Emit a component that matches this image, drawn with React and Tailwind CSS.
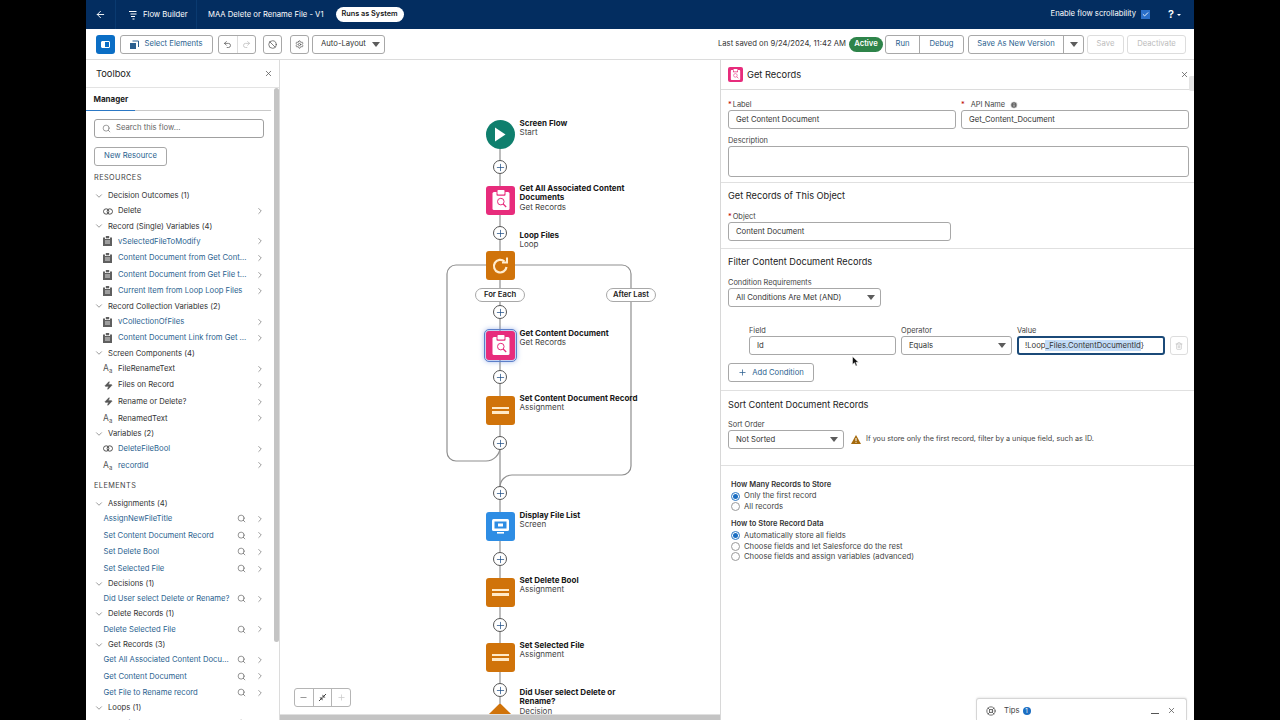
import React from "react";
import { ArrowLeft, Search, ChevronRight, ChevronDown, X, Undo2, Redo2, Ban, Settings, Plus, Minus, Trash2, Zap, Check, Info, LifeBuoy } from "lucide-react";

const Caret = ({ c = "#5c5c5c" }) => (
  <svg width="8" height="5" viewBox="0 0 8 5"><path d="M0 0h8L4 5z" fill={c} /></svg>
);

const RecIcon = () => (
  <svg width="9" height="10" viewBox="0 0 9 10"><path d="M0 1.5h2V3h5V1.5h2V10H0z" fill="#5f5f5f" /><rect x="2.8" y="0" width="3.4" height="2.3" fill="#5f5f5f" /><path d="M2 5h5M2 7h5" stroke="#fff" strokeWidth=".8" /></svg>
);
const BoolIcon = () => (
  <svg width="10" height="7" viewBox="0 0 10 7" fill="none" stroke="#444" strokeWidth=".9"><circle cx="3.2" cy="3.5" r="2.7" /><circle cx="6.8" cy="3.5" r="2.7" /></svg>
);
const TextIcon = () => (
  <span className="text-[8.5px] leading-none text-[#555]">A<sub className="text-[6px]">a</sub></span>
);
const ZapIcon = () => <Zap size={9} className="ml-[1px] text-[#555] fill-[#555]" />;
const icons = { rec: RecIcon, bool: BoolIcon, text: TextIcon, zap: ZapIcon };

const Group = ({ children }) => (
  <div className="flex h-[13.8px] items-center gap-[4px] pl-[8px] text-[#333]">
    <ChevronDown size={10} strokeWidth={1.3} className="text-[#444]" />
    <span className="whitespace-nowrap">{children}</span>
  </div>
);

const Res = ({ icon, children, dark }) => {
  const I = icons[icon];
  return (
    <div className="flex h-[16.6px] items-center pl-[17px] pr-[6px]">
      <span className="flex w-[15px] shrink-0 justify-start"><I /></span>
      <span className={`flex-1 whitespace-nowrap ${dark ? "text-[#333]" : "text-[#2b5f8f]"}`}>{children}</span>
      <ChevronRight size={10} strokeWidth={1.3} className="text-[#444]" />
    </div>
  );
};

const El = ({ children }) => (
  <div className="flex h-[16.6px] items-center pl-[17.5px] pr-[6px]">
    <span className="flex-1 whitespace-nowrap text-[#2b5f8f]">{children}</span>
    <Search size={9} strokeWidth={1.5} className="mr-[9px] text-[#444]" />
    <ChevronRight size={10} strokeWidth={1.3} className="text-[#444]" />
  </div>
);

const Btn = ({ children, className = "" }) => (
  <div className={`flex h-[19px] items-center justify-center whitespace-nowrap rounded-[3px] border border-[#a8a8a8] bg-white ${className}`}>{children}</div>
);

const Toolbox = () => (
  <aside className="relative flex w-[194px] shrink-0 flex-col border-r border-[#dcdcdc] bg-white text-[7.7px]">
    <div className="flex h-[28px] shrink-0 items-center justify-between border-b border-[#e3e3e3] pl-[10px] pr-[6.500px]">
      <span className="text-[9.300px] text-[#222]">Toolbox</span>
      <X size={9} className="text-[#555]" />
    </div>
    <div className="flex min-h-0 flex-1">
      <div className="min-w-0 w-[185px] overflow-hidden">
        <div className="h-[22.5px] border-b border-[#c9c9c9]">
          <div className="flex h-[22.5px] w-[49px] items-center border-b border-[#2b78c5] pl-[7.5px] text-[8px] font-bold text-[#222]">Manager</div>
        </div>
        <div className="ml-[8px] mt-[8px] flex h-[19px] w-[170px] items-center gap-[5px] rounded-[3px] border border-[#a0a0a0] pl-[7px] text-[#666]">
          <Search size={9} strokeWidth={1.5} className="text-[#555]" /> Search this flow...
        </div>
        <Btn className="ml-[8px] mt-[9px] w-[73px] text-[#2b5f8f]">New Resource</Btn>
        <div className="ml-[8px] mt-[6.5px] mb-[5px] h-[12px] text-[7.3px] leading-[12px] tracking-[.06em] text-[#444]">RESOURCES</div>
        <Group>Decision Outcomes (1)</Group>
        <Res icon="bool" dark>Delete</Res>
        <Group>Record (Single) Variables (4)</Group>
        <Res icon="rec">vSelectedFileToModify</Res>
        <Res icon="rec">Content Document from Get Cont...</Res>
        <Res icon="rec">Content Document from Get File t...</Res>
        <Res icon="rec">Current Item from Loop Loop Files</Res>
        <Group>Record Collection Variables (2)</Group>
        <Res icon="rec">vCollectionOfFiles</Res>
        <Res icon="rec">Content Document Link from Get ...</Res>
        <Group>Screen Components (4)</Group>
        <Res icon="text" dark>FileRenameText</Res>
        <Res icon="zap" dark>Files on Record</Res>
        <Res icon="zap" dark>Rename or Delete?</Res>
        <Res icon="text" dark>RenamedText</Res>
        <Group>Variables (2)</Group>
        <Res icon="bool">DeleteFileBool</Res>
        <Res icon="text">recordId</Res>
        <div className="ml-[8px] mt-[6.5px] mb-[4.5px] h-[12px] text-[7.3px] leading-[12px] tracking-[.06em] text-[#444]">ELEMENTS</div>
        <Group>Assignments (4)</Group>
        <El>AssignNewFileTitle</El>
        <El>Set Content Document Record</El>
        <El>Set Delete Bool</El>
        <El>Set Selected File</El>
        <Group>Decisions (1)</Group>
        <El>Did User select Delete or Rename?</El>
        <Group>Delete Records (1)</Group>
        <El>Delete Selected File</El>
        <Group>Get Records (3)</Group>
        <El>Get All Associated Content Docu...</El>
        <El>Get Content Document</El>
        <El>Get File to Rename record</El>
        <Group>Loops (1)</Group>
        <El>Loop Files</El>
      </div>
      <div className="ml-[3px] h-[554px] w-[5px] rounded-full bg-[#c4c4c4]" />
    </div>
  </aside>
);

const PlusNode = ({ y }) => (
  <div className="absolute left-[213px] flex h-[14px] w-[14px] items-center justify-center rounded-full border border-[#555] bg-white text-[#1f4e85]" style={{ top: y - 7 - 60 }}>
    <Plus size={11} strokeWidth={1.6} />
  </div>
);

const Clip = ({ c = "#e72c7c", size = 20 }) => (
  <svg width={size} height={size} viewBox="0 0 20 20">
    <rect x="1.5" y="2" width="17" height="18" rx="1.5" fill="#fff" />
    <rect x="5.5" y="0" width="9" height="5.8" rx="1" fill={c} />
    <rect x="6.5" y="0" width="7" height="4.6" rx=".8" fill="#fff" />
    <circle cx="9.8" cy="11.6" r="3.3" fill="none" stroke={c} strokeWidth="1" />
    <path d="M12.2 14l3 3" stroke={c} strokeWidth="1.2" />
  </svg>
);

const Tile = ({ y, color, children, ring }) => (
  <div className={`absolute left-[206px] flex h-[29px] w-[29px] items-center justify-center rounded-[3px] ${ring ? "outline-[1.5px] outline-[#5c7fc9] outline-offset-[1px] shadow-[0_0_5px_2px_rgba(90,130,220,.5)]" : ""}`} style={{ top: y - 14.5 - 60, background: color }}>
    {children}
  </div>
);

const Label = ({ y, title, sub }) => (
  <div className="absolute left-[239.5px] text-[8px] leading-[9.7px]" style={{ top: y + 0.5 - 60 }}>
    {title.map((t) => <div key={t} className="whitespace-nowrap font-bold text-[#181818]">{t}</div>)}
    <div className="text-[#444]">{sub}</div>
  </div>
);

const Pill = ({ x, children }) => (
  <div className="absolute top-[228px] flex h-[14px] w-[50px] items-center justify-center rounded-full border border-[#a8a8a8] bg-white text-[7.7px] font-semibold text-[#222]" style={{ left: x }}>{children}</div>
);

const Eq = () => (
  <div className="flex flex-col gap-[2px]"><div className="h-[2.5px] w-[17px] bg-[#ffe9c7]" /><div className="h-[2.5px] w-[17px] bg-[#ffe9c7]" /></div>
);

const Canvas = () => (
  <main className="relative min-w-0 w-[440px] shrink-0 overflow-hidden bg-white">
    <svg className="absolute left-0 top-0" width="440" height="660" fill="none" stroke="#8f8f8f" strokeWidth="1.2">
      <path d="M220 85V650" />
      <path d="M206 205H176a9 9 0 0 0-9 9V392a9 9 0 0 0 9 9h30a14 14 0 0 0 14-14" />
      <path d="M235 205H342a9 9 0 0 1 9 9V406a9 9 0 0 1-9 9H232a12 12 0 0 0-12 12" />
    </svg>
    <div className="absolute left-[205.5px] top-[59.5px] flex h-[29px] w-[29px] items-center justify-center rounded-full bg-[#0f7f6d]">
      <svg width="12" height="15" viewBox="0 0 12 15"><path d="M1 .5l10.5 7L1 14.5z" fill="#fff" /></svg>
    </div>
    <Tile y={200} color="#e72c7c"><Clip /></Tile>
    <Tile y={265} color="#d0730a">
      <svg width="19" height="19" viewBox="0 0 19 19" fill="none" stroke="#ffeccf" strokeWidth="2.2"><path d="M15.5 11a6.3 6.3 0 1 1-2-5.5" /><path d="M16 1.5v5h-5" strokeWidth="2" /></svg>
    </Tile>
    <Tile y={345} color="#e72c7c" ring><Clip /></Tile>
    <Tile y={410} color="#d0730a"><Eq /></Tile>
    <Tile y={526} color="#2e8de4">
      <svg width="17" height="15" viewBox="0 0 17 15"><rect x="0" y="0" width="17" height="12" rx="1.5" fill="#fff" /><rect x="2.5" y="2.5" width="12" height="7" fill="#2e8de4" /><rect x="6" y="4.5" width="5" height="3" fill="#fff" /><rect x="5" y="13" width="7" height="1.6" fill="#fff" /></svg>
    </Tile>
    <Tile y={592} color="#d0730a"><Eq /></Tile>
    <Tile y={657} color="#d0730a"><Eq /></Tile>
    <div className="absolute left-[208px] top-[648px] h-[24px] w-[24px] rotate-45 rounded-[2px] bg-[#d0730a]" />
    {[167, 233, 312, 377, 443, 493, 559, 625, 690].map((y) => <PlusNode key={y} y={y} />)}
    <Pill x={195}>For Each</Pill>
    <Pill x={326}>After Last</Pill>
    <Label y={118} title={["Screen Flow"]} sub="Start" />
    <Label y={183} title={["Get All Associated Content", "Documents"]} sub="Get Records" />
    <Label y={230} title={["Loop Files"]} sub="Loop" />
    <Label y={328} title={["Get Content Document"]} sub="Get Records" />
    <Label y={393} title={["Set Content Document Record"]} sub="Assignment" />
    <Label y={510} title={["Display File List"]} sub="Screen" />
    <Label y={575} title={["Set Delete Bool"]} sub="Assignment" />
    <Label y={640} title={["Set Selected File"]} sub="Assignment" />
    <Label y={687} title={["Did User select Delete or", "Rename?"]} sub="Decision" />
    <div className="absolute left-[14px] top-[628px] flex h-[19px] w-[57px] rounded-[3px] border border-[#b5b5b5] bg-white">
      <div className="flex flex-1 items-center justify-center border-r border-[#b5b5b5]"><Minus size={9} className="text-[#777]" /></div>
      <div className="flex flex-1 items-center justify-center border-r border-[#b5b5b5]">
        <svg width="9" height="9" viewBox="0 0 9 9"><path d="M1 8l2.5-2.5M8 1L5.5 3.5" stroke="#444" strokeWidth="1" /><path d="M1.5 4.5h3v3zM7.500 4.500h-3v-3z" fill="#444" /></svg>
      </div>
      <div className="flex flex-1 items-center justify-center"><Plus size={9} className="text-[#c9c9c9]" /></div>
    </div>
    <div className="absolute bottom-0 left-0 right-0 h-[6px] border-t border-[#e0e0e0] bg-[#c4c4c4]" />
  </main>
);

const FieldLabel = ({ req, children, className = "" }) => (
  <div className={`mb-[1px] h-[10px] translate-y-[1px] whitespace-nowrap text-[7.4px] leading-[10px] text-[#444] ${className}`}>
    {req && <span className="mr-[1px] text-[#b00]">*</span>}{children}
  </div>
);

const Input = ({ children, className = "" }) => (
  <div className={`flex h-[19px] items-center rounded-[3px] border border-[#a8a8a8] bg-white pl-[7px] text-[#333] ${className}`}>{children}</div>
);

const Select = ({ children, className = "" }) => (
  <div className={`flex h-[19px] items-center justify-between rounded-[3px] border border-[#a8a8a8] bg-white pl-[7px] pr-[5px] text-[#333] ${className}`}>{children}<Caret /></div>
);

const Radio = ({ on, children }) => (
  <div className="flex h-[10.4px] items-center gap-[4px] text-[#444]">
    <span className={`flex h-[9px] w-[9px] items-center justify-center rounded-full border ${on ? "border-[#2b78c5]" : "border-[#9a9a9a]"}`}>
      {on && <span className="h-[5px] w-[5px] rounded-full bg-[#1b6ec2]" />}
    </span>
    {children}
  </div>
);

const Section = ({ children, className = "" }) => (
  <section className={`border-b border-[#e0e0e0] pl-[7px] pr-[4px] ${className}`}>{children}</section>
);

const Heading = ({ children }) => <div className="h-[12px] translate-y-[1px] text-[9.2px] leading-[12px] text-[#222]">{children}</div>;

const Panel = () => (
  <aside className="relative min-w-0 flex-1 overflow-hidden border-l border-[#d8d8d8] bg-white text-[7.7px]">
    <div className="flex h-[30px] items-center border-b border-[#dcdcdc] pl-[7px] pr-[5px]">
      <div className="mr-[4px] flex h-[15px] w-[15px] items-center justify-center rounded-[2px] bg-[#e72c7c]"><Clip size={11} /></div>
      <span className="flex-1 text-[9.3px] text-[#222]">Get Records</span>
      <X size={9} className="text-[#555]" />
    </div>
    <Section className="h-[93px] pt-[9px]">
      <div className="flex gap-[5px]">
        <div className="w-[228px]"><FieldLabel req>Label</FieldLabel><Input>Get Content Document</Input></div>
        <div className="w-[228px]">
          <FieldLabel req className="flex items-center gap-[5px]"><span>API Name</span><Info size={8} className="fill-[#666] text-white" /></FieldLabel>
          <Input>Get_Content_Document</Input>
        </div>
      </div>
      <FieldLabel className="mt-[6px]">Description</FieldLabel>
      <div className="h-[31px] w-[461px] rounded-[3px] border border-[#a8a8a8]" />
    </Section>
    <Section className="h-[66px] pt-[6px]">
      <Heading>Get Records of This Object</Heading>
      <FieldLabel req className="mt-[10px]">Object</FieldLabel>
      <Input className="w-[223px]">Content Document</Input>
    </Section>
    <Section className="h-[142px] pt-[6px]">
      <Heading>Filter Content Document Records</Heading>
      <FieldLabel className="mt-[10px]">Condition Requirements</FieldLabel>
      <Select className="w-[153px]">All Conditions Are Met (AND)</Select>
      <div className="ml-[21px] mt-[18px] flex items-end gap-[5px]">
        <div className="w-[147px]"><FieldLabel>Field</FieldLabel><Input>Id</Input></div>
        <div className="w-[111px]"><FieldLabel>Operator</FieldLabel><Select>Equals</Select></div>
        <div className="w-[148px]">
          <FieldLabel>Value</FieldLabel>
          <div className="flex h-[19px] items-center whitespace-nowrap rounded-[3px] border-2 border-[#1b4a78] bg-white pl-[6px] text-[#333]">!Loop<span className="bg-[#c3dcf7]">_Files.ContentDocumentId</span>{"}"}</div>
        </div>
        <div className="flex h-[19px] w-[18px] items-center justify-center rounded-[3px] border border-[#ddd]"><Trash2 size={8} className="text-[#c0c0c0]" /></div>
      </div>
      <Btn className="mt-[8px] w-[86px] gap-[5px] text-[#2b5f8f]"><Plus size={9} />Add Condition</Btn>
    </Section>
    <Section className="h-[75px] pt-[7px]">
      <Heading>Sort Content Document Records</Heading>
      <FieldLabel className="mt-[9px]">Sort Order</FieldLabel>
      <div className="flex items-center">
        <Select className="w-[116px]">Not Sorted</Select>
        <svg className="ml-[7px] mr-[5px]" width="10" height="9" viewBox="0 0 10 9"><path d="M5 0l5 9H0z" fill="#a4690c" /><path d="M5 3v3M5 6.800v1" stroke="#fff" strokeWidth="1" /></svg>
        <span className="whitespace-nowrap text-[7.25px] text-[#444]">If you store only the first record, filter by a unique field, such as ID.</span>
      </div>
    </Section>
    <div className="pl-[10px] pt-[14px]">
      <div className="mb-[1px] h-[10px] text-[7.5px] font-semibold leading-[10px] text-[#333]">How Many Records to Store</div>
      <Radio on>Only the first record</Radio>
      <Radio>All records</Radio>
      <div className="mb-[2px] mt-[7px] h-[10px] text-[7.5px] font-semibold leading-[10px] text-[#333]">How to Store Record Data</div>
      <Radio on>Automatically store all fields</Radio>
      <Radio>Choose fields and let Salesforce do the rest</Radio>
      <Radio>Choose fields and assign variables (advanced)</Radio>
    </div>
    <div className="absolute right-0 top-[16px] h-[15px] w-[5px] rounded-l-[2px] bg-[#e4e4e4]" />
    <svg className="absolute left-[131px] top-[296px]" width="7" height="11" viewBox="0 0 7 11">
      <path d="M.5.5v8l2-1.800 1.300 3.300 1.400-.6-1.300-3.100H6.500z" fill="#111" stroke="#fff" strokeWidth=".5" />
    </svg>
    <div className="absolute bottom-0 left-[255px] flex h-[22px] w-[211px] items-center rounded-t-[3px] border border-b-0 border-[#d6d6d6] bg-white pl-[9px] pr-[10px] pt-[2px] shadow-[0_-1px_2px_rgba(0,0,0,.08)]">
      <LifeBuoy size={10} className="text-[#555]" />
      <span className="ml-[8px] text-[#444]">Tips</span>
      <span className="ml-[3px] flex h-[8px] w-[8px] items-center justify-center rounded-full bg-[#1b6ec2] text-[6px] text-white">1</span>
      <div className="ml-auto mt-[5px] h-[1px] w-[8px] bg-[#555]" />
      <X size={9} className="ml-[8px] text-[#555]" />
    </div>
  </aside>
);

export default function App() {
  return (
    <div className="h-[720px] w-[1280px] overflow-hidden bg-black pl-[86px] font-['Inter',sans-serif]">
      <div className="flex h-full w-[1108px] flex-col bg-white">
        <header className="flex h-[29px] shrink-0 items-center bg-[#032d60] text-[7.7px] text-white">
          <div className="flex h-full w-[30px] items-center justify-center border-r border-[#0a3a70]"><ArrowLeft size={11} /></div>
          <div className="flex h-full w-[81px] items-center gap-[5px] border-r border-[#0a3a70] pl-[12px]">
            <svg width="10" height="11" viewBox="0 0 10 11" fill="none" stroke="#fff" strokeWidth="1.1"><path d="M1 2.500h7.500M2.500 5h6M3 7.500h4M4.500 10h2" /></svg>
            Flow Builder
          </div>
          <span className="ml-[11px] whitespace-nowrap">MAA Delete or Rename File - V1</span>
          <span className="ml-[12px] flex h-[15px] w-[68px] items-center justify-center whitespace-nowrap rounded-full bg-white text-[7.3px] font-semibold text-[#181818]">Runs as System</span>
          <span className="ml-auto -translate-y-[1px] whitespace-nowrap">Enable flow scrollability</span>
          <span className="ml-[5px] flex h-[9px] w-[9px] items-center justify-center bg-[#2a6fc9]"><Check size={7} strokeWidth={3} /></span>
          <span className="ml-[18px] text-[11px] font-semibold">?</span>
          <span className="ml-[3px] mr-[13px] h-0 w-0 border-x-[2px] border-t-[2px] border-x-transparent border-t-white" />
        </header>
        <div className="flex h-[31px] shrink-0 items-center border-b border-[#dcdcdc] bg-white pl-[10px] text-[7.7px]">
          <div className="flex h-[19px] w-[19px] items-center justify-center rounded-[3px] bg-[#0b6ec5]">
            <span className="flex h-[7px] w-[9px] rounded-[1px] border border-white"><span className="w-[3px] bg-white" /></span>
          </div>
          <Btn className="ml-[5px] w-[93px] gap-[5px] text-[#2b5f8f]">
            <svg width="9" height="9" viewBox="0 0 9 9"><rect x="0" y="3" width="6" height="6" fill="#2b5f8f" /><path d="M2.500 1H8.500V7" fill="none" stroke="#2b5f8f" strokeWidth="1" /></svg>
            Select Elements
          </Btn>
          <div className="ml-[5px] flex h-[19px] w-[38px] rounded-[3px] border border-[#a8a8a8]">
            <div className="flex flex-1 items-center justify-center border-r border-[#ddd]"><Undo2 size={9} className="text-[#555]" /></div>
            <div className="flex flex-1 items-center justify-center"><Redo2 size={9} className="text-[#bbb]" /></div>
          </div>
          <Btn className="ml-[7px] w-[19px]"><Ban size={9} className="text-[#555]" /></Btn>
          <Btn className="ml-[8px] w-[19px]"><Settings size={9} className="text-[#555]" /></Btn>
          <div className="ml-[3px] flex h-[19px] w-[73px] items-center justify-between whitespace-nowrap rounded-[3px] border border-[#a8a8a8] bg-white pl-[8px] pr-[4px] text-[#333]">Auto-Layout<Caret /></div>
          <span className="ml-auto whitespace-nowrap text-[#333]">Last saved on 9/24/2024, 11:42 AM</span>
          <span className="ml-[3px] flex h-[15px] w-[34px] items-center justify-center rounded-full bg-[#2e844a] font-semibold text-white">Active</span>
          <div className="ml-[2px] flex h-[19px] w-[79px] rounded-[3px] border border-[#a8a8a8] text-[#2b5f8f]">
            <div className="flex w-[34px] items-center justify-center border-r border-[#a8a8a8]">Run</div>
            <div className="flex flex-1 items-center justify-center">Debug</div>
          </div>
          <div className="ml-[4px] flex h-[19px] w-[116px] rounded-[3px] border border-[#a8a8a8] text-[#2b5f8f]">
            <div className="flex flex-1 items-center justify-center border-r border-[#a8a8a8]">Save As New Version</div>
            <div className="flex w-[19px] items-center justify-center"><Caret /></div>
          </div>
          <Btn className="ml-[3px] w-[37px] border-[#ddd] text-[#bcbcbc]">Save</Btn>
          <Btn className="ml-[3px] mr-[8px] w-[59px] border-[#ddd] text-[#bcbcbc]">Deactivate</Btn>
        </div>
        <div className="flex min-h-0 flex-1">
          <Toolbox />
          <Canvas />
          <Panel />
        </div>
      </div>
    </div>
  );
}
